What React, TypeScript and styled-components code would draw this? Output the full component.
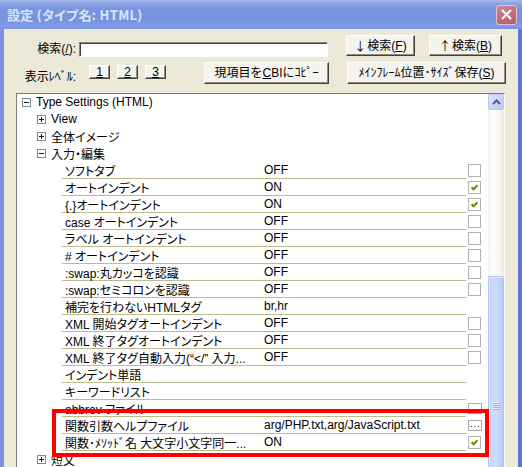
import React from 'react';
import styled, { createGlobalStyle } from 'styled-components';

const GlobalStyle = createGlobalStyle`
  html, body { margin: 0; padding: 0; background: #ECE9D8; }
  body {
    font-family: "Liberation Sans", "Noto Sans CJK JP", sans-serif;
    font-size: 12px;
    color: #000;
  }
  * { box-sizing: border-box; }
`;

const Window = styled.div`
  width: 522px;
  height: 467px;
  overflow: hidden;
  display: flex;
  flex-direction: column;
`;

const TitleBar = styled.div`
  height: 29px;
  flex: none;
  display: flex;
  align-items: center;
  justify-content: space-between;
  padding: 0 5px 0 7px;
  background: linear-gradient(180deg, #A9BEF0 0%, #8CA5E7 10%, #7A95DF 30%, #7893DE 70%, #7F9CE5 90%, #7A94DE 100%);
`;

const Title = styled.span`
  color: #D8E4F8;
  font-family: "Noto Sans CJK JP", sans-serif;
  font-weight: bold;
  font-size: 13px;
  font-feature-settings: "palt" 1;
  letter-spacing: 0.3px;
`;

const CloseButton = styled.div`
  width: 21px;
  height: 20px;
  border-radius: 3px;
  border: 1px solid #E6C0CA;
  background: linear-gradient(160deg, #CC8595 0%, #BD6B7D 60%, #B06074 100%);
  display: flex;
  align-items: center;
  justify-content: center;
`;

const Frame = styled.div`
  flex: 1;
  display: flex;
  flex-direction: column;
  border-left: 4px solid #7B92DF;
  border-right: 4px solid #6077D6;
  background: #ECE9D8;
  padding-top: 6px;
  min-height: 0;
`;

const ToolRow = styled.div<{ $top?: number; $h: number }>`
  display: flex;
  align-items: flex-start;
  height: ${(p) => p.$h}px;
  margin-top: ${(p) => p.$top ?? 0}px;
  flex: none;
`;

const Label = styled.span<{ $top: number }>`
  width: 72px;
  text-align: right;
  line-height: 14px;
  margin-top: ${(p) => p.$top}px;
  white-space: nowrap;
`;

const SearchInput = styled.div`
  width: 249px;
  height: 15px;
  margin-left: 3px;
  margin-top: 7px;
  background: #fff;
  border: 1px solid;
  border-color: #8A887C #FFFFFF #FFFFFF #8A887C;
  box-shadow: inset 1px 1px 0 #404040;
`;

const Button = styled.div<{ $w: number; $h: number; $left: number; $top?: number }>`
  width: ${(p) => p.$w}px;
  height: ${(p) => p.$h}px;
  margin-left: ${(p) => p.$left}px;
  margin-top: ${(p) => p.$top ?? 0}px;
  background: #F4F3EE;
  border: 1px solid;
  border-color: #FFFFFF #404040 #404040 #FFFFFF;
  box-shadow: inset -1px -1px 0 #8E8C80;
  display: flex;
  align-items: center;
  justify-content: center;
  white-space: nowrap;
  line-height: 12px;
  flex: none;
  u { text-decoration: underline; text-underline-offset: 1px; }
`;

const Arrow = styled.span`
  font-family: "Noto Sans CJK JP", sans-serif;
  margin-right: 1px;
`;

const Panel = styled.div`
  margin-left: 12px;
  margin-top: 9px;
  width: 489px;
  height: 380px;
  flex: none;
  display: flex;
  background: #fff;
  border-top: 1px solid #7F7D72;
  border-left: 1px solid #7F7D72;
  border-right: 1px solid #FFFFFF;
`;

const Rows = styled.div`
  flex: 1;
  display: flex;
  flex-direction: column;
  position: relative;
`;

const NodeRow = styled.div<{ $level: number }>`
  height: 17px;
  flex: none;
  display: flex;
  align-items: center;
  padding-left: ${(p) => 5 + 15 * p.$level}px;
  padding-bottom: 1px;
`;

const NodeLabel = styled.span`
  margin-left: 5px;
  white-space: nowrap;
  font-feature-settings: "palt" 1;
`;

const LeafRow = styled.div`
  height: 17px;
  flex: none;
  display: flex;
  padding-left: 45px;
`;

const Cells = styled.div`
  width: 404px;
  display: flex;
  align-items: center;
  border-bottom: 1px solid #BEBC8C;
`;

const NameCell = styled.span`
  width: 201px;
  padding-left: 3px;
  white-space: nowrap;
  overflow: hidden;
  font-feature-settings: "palt" 1;
`;

const ValueCell = styled.span`
  flex: 1;
  padding-left: 1px;
  white-space: nowrap;
  overflow: hidden;
`;

const Control = styled.div`
  width: 22px;
  display: flex;
  padding-left: 2px;
  padding-top: 2px;
`;

const CheckBox = styled.div`
  width: 13px;
  height: 13px;
  border: 1px solid #B2B2B2;
  background: #fff;
  display: flex;
  align-items: center;
  justify-content: center;
`;

const MoreButton = styled.div`
  width: 14px;
  height: 11px;
  margin-top: 1px;
  border: 1px solid #A9A9A9;
  background: #fff;
  display: flex;
  align-items: center;
  justify-content: center;
`;

const Highlight = styled.div`
  position: relative;
  display: flex;
  flex-direction: column;
  &::after {
    content: "";
    position: absolute;
    left: 35px;
    right: -1px;
    top: -8px;
    bottom: -6px;
    border: 4px solid #FF0000;
    z-index: 2;
    pointer-events: none;
  }
`;

const ScrollBar = styled.div`
  width: 16px;
  flex: none;
  display: flex;
  flex-direction: column;
  background: linear-gradient(90deg, #F3F1EC 0%, #FEFEFB 25%, #F8F7F2 70%, #EDEBE3 100%);
`;

const ArrowButton = styled.div`
  height: 16px;
  flex: none;
  border: 1px solid #B7C9F4;
  border-radius: 2px;
  background: linear-gradient(135deg, #DDE7FE 0%, #C7D6FC 50%, #B8CCF9 100%);
  display: flex;
  align-items: center;
  justify-content: center;
`;

const Track = styled.div`
  height: 166px;
  flex: none;
`;

const Thumb = styled.div`
  flex: 1;
  border: 1px solid #AFC3F3;
  border-bottom: none;
  border-radius: 2px 2px 0 0;
  background: linear-gradient(90deg, #C2D3FC 0%, #CCDBFD 40%, #C4D4FB 80%, #B6CAF7 100%);
  box-shadow: inset 1px 1px 0 #E4ECFE;
  display: flex;
  justify-content: center;
  padding-top: 125px;
`;

const Expander = ({ open }: { open: boolean }) => (
  <svg width="9" height="9" viewBox="0 0 9 9" style={{ flex: 'none' }}>
    <rect x="0.5" y="0.5" width="8" height="8" fill="#fff" stroke="#7E8A96" />
    <path d="M2 4.5h5" stroke="#1A1A1A" />
    {!open && <path d="M4.5 2v5" stroke="#1A1A1A" />}
  </svg>
);

const Check = () => (
  <svg width="11" height="11" viewBox="0 0 11 11">
    <path d="M2.5 5.2 L4.5 7.3 L8.5 3.2" fill="none" stroke="#808000" strokeWidth="2" />
  </svg>
);

const Dots = () => (
  <svg width="10" height="5" viewBox="0 0 10 5">
    <rect x="1" y="3" width="1" height="1" fill="#333" />
    <rect x="4.5" y="3" width="1" height="1" fill="#333" />
    <rect x="8" y="3" width="1" height="1" fill="#333" />
  </svg>
);

type Ctl = 'on' | 'off' | 'more' | 'none';
type Leaf = { name: string; value: string; ctl: Ctl };

const leaves: Leaf[] = [
  { name: 'ソフトタブ', value: 'OFF', ctl: 'off' },
  { name: 'オートインデント', value: 'ON', ctl: 'on' },
  { name: '{.}オートインデント', value: 'ON', ctl: 'on' },
  { name: 'case オートインデント', value: 'OFF', ctl: 'off' },
  { name: 'ラベル オートインデント', value: 'OFF', ctl: 'off' },
  { name: '# オートインデント', value: 'OFF', ctl: 'off' },
  { name: ':swap:丸カッコを認識', value: 'OFF', ctl: 'off' },
  { name: ':swap:セミコロンを認識', value: 'OFF', ctl: 'off' },
  { name: '補完を行わないHTMLタグ', value: 'br,hr', ctl: 'none' },
  { name: 'XML 開始タグオートインデント', value: 'OFF', ctl: 'off' },
  { name: 'XML 終了タグオートインデント', value: 'OFF', ctl: 'off' },
  { name: 'XML 終了タグ自動入力(“</” 入力...', value: 'OFF', ctl: 'off' },
  { name: 'インデント単語', value: '', ctl: 'none' },
  { name: 'キーワードリスト', value: '', ctl: 'none' },
  { name: 'abbrev ファイル', value: '', ctl: 'more' },
];

const marked: Leaf[] = [
  { name: '関数引数ヘルプファイル', value: 'arg/PHP.txt,arg/JavaScript.txt', ctl: 'more' },
  { name: '関数･ﾒｿｯﾄﾞ名 大文字小文字同一...', value: 'ON', ctl: 'on' },
];

const SettingRow = ({ leaf }: { leaf: Leaf }) => (
  <LeafRow>
    <Cells>
      <NameCell>{leaf.name}</NameCell>
      <ValueCell>{leaf.value}</ValueCell>
    </Cells>
    <Control>
      {(leaf.ctl === 'on' || leaf.ctl === 'off') && (
        <CheckBox>{leaf.ctl === 'on' && <Check />}</CheckBox>
      )}
      {leaf.ctl === 'more' && (
        <MoreButton>
          <Dots />
        </MoreButton>
      )}
    </Control>
  </LeafRow>
);

export default function App() {
  return (
    <>
      <GlobalStyle />
      <Window>
        <TitleBar>
          <Title>設定 (タイプ名: HTML)</Title>
          <CloseButton>
            <svg width="13" height="13" viewBox="0 0 13 13">
              <path d="M2 2 L11 11 M11 2 L2 11" stroke="#fff" strokeWidth="2" />
            </svg>
          </CloseButton>
        </TitleBar>
        <Frame>
          <ToolRow $h={20}>
            <Label $top={7}>
              検索(<u>/</u>):
            </Label>
            <SearchInput />
            <Button $w={69} $h={21} $left={18}>
              <Arrow>↓</Arrow>検索(<u>F</u>)
            </Button>
            <Button $w={73} $h={21} $left={14}>
              <Arrow>↑</Arrow>検索(<u>B</u>)
            </Button>
          </ToolRow>
          <ToolRow $h={22} $top={7}>
            <Label $top={8}>表示ﾚﾍﾞﾙ:</Label>
            <Button $w={21} $h={14} $left={13} $top={3}>
              <u>1</u>
            </Button>
            <Button $w={21} $h={14} $left={7} $top={3}>
              <u>2</u>
            </Button>
            <Button $w={21} $h={14} $left={7} $top={3}>
              <u>3</u>
            </Button>
            <Button $w={125} $h={22} $left={38}>
              現項目を<u>C</u>BIにｺﾋﾟｰ
            </Button>
            <Button $w={159} $h={22} $left={18}>
              ﾒｲﾝﾌﾚｰﾑ位置･ｻｲｽﾞ保存(<u>S</u>)
            </Button>
          </ToolRow>
          <Panel>
            <Rows>
              <NodeRow $level={0}>
                <Expander open />
                <NodeLabel>Type Settings (HTML)</NodeLabel>
              </NodeRow>
              <NodeRow $level={1}>
                <Expander open={false} />
                <NodeLabel>View</NodeLabel>
              </NodeRow>
              <NodeRow $level={1}>
                <Expander open={false} />
                <NodeLabel>全体イメージ</NodeLabel>
              </NodeRow>
              <NodeRow $level={1}>
                <Expander open />
                <NodeLabel>入力・編集</NodeLabel>
              </NodeRow>
              {leaves.map((l) => (
                <SettingRow key={l.name} leaf={l} />
              ))}
              <Highlight>
                {marked.map((l) => (
                  <SettingRow key={l.name} leaf={l} />
                ))}
              </Highlight>
              <NodeRow $level={1}>
                <Expander open={false} />
                <NodeLabel>短文</NodeLabel>
              </NodeRow>
            </Rows>
            <ScrollBar>
              <ArrowButton>
                <svg width="9" height="6" viewBox="0 0 9 6">
                  <path d="M1 5 L4.5 1.5 L8 5" fill="none" stroke="#4D6185" strokeWidth="2" />
                </svg>
              </ArrowButton>
              <Track />
              <Thumb>
                <svg width="8" height="8" viewBox="0 0 8 8">
                  <path d="M0 0.5h7 M0 2.5h7 M0 4.5h7 M0 6.5h7" stroke="#EEF3FE" />
                  <path d="M1 1.5h7 M1 3.5h7 M1 5.5h7 M1 7.5h7" stroke="#8EAAF0" />
                </svg>
              </Thumb>
            </ScrollBar>
          </Panel>
        </Frame>
      </Window>
    </>
  );
}
